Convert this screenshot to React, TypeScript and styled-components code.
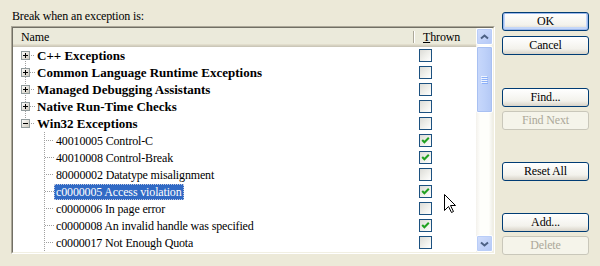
import React from 'react';
import styled, { createGlobalStyle, css } from 'styled-components';

const GlobalStyle = createGlobalStyle`
  html, body {
    margin: 0;
    padding: 0;
  }
  body {
    background: #ece9d8;
    font-family: "Liberation Serif", "Times New Roman", serif;
    font-size: 12px;
    color: #000;
  }
`;

const ROW_H = 17;

const Dialog = styled.div`
  position: relative;
  width: 600px;
  height: 266px;
  overflow: hidden;
  display: flex;
  padding-left: 11px;
  box-sizing: border-box;
  background: #ece9d8;
`;

const LeftPane = styled.div`
  width: 484px;
  display: flex;
  flex-direction: column;
`;

const Caption = styled.div`
  height: 26px;
  box-sizing: border-box;
  padding: 9px 0 0 1px;
  line-height: 14px;
  letter-spacing: -0.15px;
`;

const ListFrame = styled.div`
  height: 228px;
  box-sizing: border-box;
  border: 1px solid;
  border-color: #aca899 #ffffff #ffffff #aca899;
`;

const ListInner = styled.div`
  height: 100%;
  box-sizing: border-box;
  border: 1px solid;
  border-color: #716f64 #f1efe2 #f1efe2 #716f64;
  display: flex;
`;

const Content = styled.div`
  flex: 1;
  display: flex;
  flex-direction: column;
  background: #fff;
  overflow: hidden;
`;

const Header = styled.div`
  height: 19px;
  flex: none;
  display: flex;
  background: #ebeadb;
  box-shadow: inset 0 -1px 0 #cbc7b8, inset 0 -2px 0 #d6d2c2, inset 0 -3px 0 #e2decd;
`;

const HeaderCell = styled.div<{ $w: number; $pad: number; $divider?: boolean }>`
  width: ${({ $w }) => $w}px;
  box-sizing: border-box;
  padding-left: ${({ $pad }) => $pad}px;
  line-height: 18px;
  letter-spacing: -0.15px;
  position: relative;
  ${({ $divider }) =>
    $divider &&
    css`
      &::before {
        content: '';
        position: absolute;
        left: 0;
        top: 3px;
        bottom: 4px;
        width: 1px;
        background: #aca899;
        box-shadow: 1px 0 0 #fff;
      }
    `}
`;

const Body = styled.div`
  flex: 1;
  overflow: hidden;
`;

const Row = styled.div`
  height: ${ROW_H}px;
  display: flex;
  align-items: center;
`;

const NameCell = styled.div`
  width: 400px;
  height: 100%;
  display: flex;
  align-items: center;
`;

const Label = styled.span<{ $bold?: boolean; $selected?: boolean }>`
  padding: 0 2px;
  height: 16px;
  line-height: 16px;
  white-space: nowrap;
  box-sizing: border-box;
  ${({ $bold }) =>
    $bold
      ? css`
          font-weight: bold;
          font-size: 13px;
        `
      : css`
          font-size: 12px;
          letter-spacing: -0.15px;
        `}
  ${({ $selected }) =>
    $selected &&
    css`
      background: #316ac5;
      color: #fff;
      outline: 1px dotted #c0c8e0;
      outline-offset: -1px;
    `}
`;

const CheckCell = styled.div`
  width: 63px;
  padding-left: 6px;
  box-sizing: border-box;
  display: flex;
  align-items: center;
`;

const CheckBox = styled.div`
  width: 13px;
  height: 13px;
  box-sizing: border-box;
  border: 1px solid #1c5180;
  background: linear-gradient(135deg, #dcdcd7 0%, #f2f2ee 60%, #ffffff 100%);
  display: flex;
  align-items: center;
  justify-content: center;
`;

const ScrollBar = styled.div`
  width: 17px;
  display: flex;
  flex-direction: column;
  background: linear-gradient(to right, #f3f1ec, #fefefb 25%, #fefefb 75%, #eeede5);
`;

const ArrowButton = styled.div<{ $down?: boolean }>`
  height: 17px;
  flex: none;
  box-sizing: border-box;
  border: 1px solid #fff;
  border-radius: 2px;
  background: linear-gradient(135deg, #d2defc, #b4c8f6);
  box-shadow: inset 0 0 0 1px #b9cdf8;
  display: flex;
  align-items: center;
  justify-content: center;
  ${({ $down }) => $down && 'margin-top: auto;'}
`;

const Thumb = styled.div`
  height: 67px;
  margin-top: 1px;
  box-sizing: border-box;
  border: 1px solid #fff;
  border-radius: 2px;
  background: linear-gradient(to right, #c8d8fb, #bed1f9 50%, #b3c8f5);
  box-shadow: inset 0 0 0 1px #a8c0f2;
  display: flex;
  align-items: center;
  justify-content: center;
`;

const RightPane = styled.div`
  width: 87px;
  margin-left: 7px;
  display: flex;
  flex-direction: column;
`;

const Button = styled.button<{ $top: number; $default?: boolean }>`
  height: 19px;
  margin-top: ${({ $top }) => $top}px;
  padding: 0;
  box-sizing: border-box;
  border: 1px solid #003c74;
  border-radius: 3px;
  background: linear-gradient(#ffffff, #f3f2ec 70%, #d8d3c8);
  font-family: "Liberation Serif", "Times New Roman", serif;
  font-size: 12px;
  line-height: 17px;
  letter-spacing: -0.15px;
  color: #000;
  ${({ $default }) =>
    $default && 'box-shadow: inset 0 0 0 1px #9cb8ec, inset 0 -1px 0 2px #c4d6f8;'}
  &:disabled {
    border-color: #c9c7ba;
    background: #f5f4ea;
    color: #aca899;
  }
`;

const Cursor = styled.svg`
  position: absolute;
  left: 444px;
  top: 194px;
`;

type Item = { text: string; level: 0 | 1; expanded?: boolean; checked?: boolean; selected?: boolean };

const items: Item[] = [
  { text: 'C++ Exceptions', level: 0 },
  { text: 'Common Language Runtime Exceptions', level: 0 },
  { text: 'Managed Debugging Assistants', level: 0 },
  { text: 'Native Run-Time Checks', level: 0 },
  { text: 'Win32 Exceptions', level: 0, expanded: true },
  { text: '40010005 Control-C', level: 1, checked: true },
  { text: '40010008 Control-Break', level: 1, checked: true },
  { text: '80000002 Datatype misalignment', level: 1 },
  { text: 'c0000005 Access violation', level: 1, checked: true, selected: true },
  { text: 'c0000006 In page error', level: 1 },
  { text: 'c0000008 An invalid handle was specified', level: 1, checked: true },
  { text: 'c0000017 Not Enough Quota', level: 1 },
];

const DOT = '#a0a0a0';

function dots(x0: number, x1: number, y0: number, y1: number, row: number) {
  const out: React.ReactNode[] = [];
  for (let x = x0; x <= x1; x++) {
    for (let y = y0; y <= y1; y++) {
      if ((x + row * ROW_H + y) % 2 === 0) out.push(<rect key={`${x}-${y}`} x={x} y={y} width={1} height={1} fill={DOT} />);
    }
  }
  return out;
}

const TreeGlyph: React.FC<{ item: Item; index: number }> = ({ item, index }) => {
  if (item.level === 1) {
    return (
      <svg width={41} height={ROW_H}>
        {dots(31, 31, 0, ROW_H - 1, index)}
        {dots(32, 40, 8, 8, index)}
      </svg>
    );
  }
  const lastRoot = 4;
  return (
    <svg width={22} height={ROW_H}>
      <defs>
        <linearGradient id="tbox" x1="0" y1="0" x2="1" y2="1">
          <stop offset="0" stopColor="#ffffff" />
          <stop offset="1" stopColor="#cdc7ba" />
        </linearGradient>
      </defs>
      {index > 0 && dots(12, 12, 0, 3, index)}
      {index < lastRoot && dots(12, 12, 13, ROW_H - 1, index)}
      {dots(17, 21, 8, 8, index)}
      <rect x={8.5} y={4.5} width={8} height={8} fill="url(#tbox)" stroke="#919b9c" />
      <rect x={10} y={8} width={5} height={1} fill="#000" />
      {!item.expanded && <rect x={12} y={6} width={1} height={5} fill="#000" />}
    </svg>
  );
};

const Check: React.FC = () => (
  <svg width={9} height={9} viewBox="0 0 9 9">
    <polyline points="1.2,4 3.4,6.3 7.8,1.8" fill="none" stroke="#21a121" strokeWidth={2} />
  </svg>
);

const Arrow: React.FC<{ down?: boolean }> = ({ down }) => (
  <svg width={9} height={6} viewBox="0 0 9 6">
    <polyline
      points={down ? '1,1.5 4.5,4.5 8,1.5' : '1,4.5 4.5,1.5 8,4.5'}
      fill="none"
      stroke="#4d6185"
      strokeWidth={2}
    />
  </svg>
);

const Grip: React.FC = () => (
  <svg width={7} height={8} viewBox="0 0 7 8">
    {[0, 2, 4, 6].map((y) => (
      <g key={y}>
        <rect x={0} y={y} width={6} height={1} fill="#eef4fe" />
        <rect x={1} y={y + 1} width={6} height={1} fill="#8cb0f8" />
      </g>
    ))}
  </svg>
);

export default function App() {
  return (
    <>
      <GlobalStyle />
      <Dialog>
        <LeftPane>
          <Caption>Break when an exception is:</Caption>
          <ListFrame>
            <ListInner>
              <Content>
                <Header>
                  <HeaderCell $w={400} $pad={8}>Name</HeaderCell>
                  <HeaderCell $w={63} $pad={10} $divider>
                    <u>T</u>hrown
                  </HeaderCell>
                </Header>
                <Body>
                  {items.map((item, i) => (
                    <Row key={item.text}>
                      <NameCell>
                        <TreeGlyph item={item} index={i} />
                        <Label $bold={item.level === 0} $selected={item.selected}>
                          {item.text}
                        </Label>
                      </NameCell>
                      <CheckCell>
                        <CheckBox>{item.checked && <Check />}</CheckBox>
                      </CheckCell>
                    </Row>
                  ))}
                </Body>
              </Content>
              <ScrollBar>
                <ArrowButton>
                  <Arrow />
                </ArrowButton>
                <Thumb>
                  <Grip />
                </Thumb>
                <ArrowButton $down>
                  <Arrow down />
                </ArrowButton>
              </ScrollBar>
            </ListInner>
          </ListFrame>
        </LeftPane>
        <RightPane>
          <Button $top={12} $default>OK</Button>
          <Button $top={5}>Cancel</Button>
          <Button $top={33}>Find...</Button>
          <Button $top={4} disabled>Find Next</Button>
          <Button $top={32}>Reset All</Button>
          <Button $top={32}>Add...</Button>
          <Button $top={4} disabled>Delete</Button>
        </RightPane>
        <Cursor width={13} height={20} viewBox="0 0 13 20">
          <path d="M0.5 0.5 L0.5 16.5 L4.5 12.5 L7.5 18.5 L9.5 17.5 L6.5 11.5 L11.5 11.5 Z" fill="#fff" stroke="#000" />
        </Cursor>
      </Dialog>
    </>
  );
}
